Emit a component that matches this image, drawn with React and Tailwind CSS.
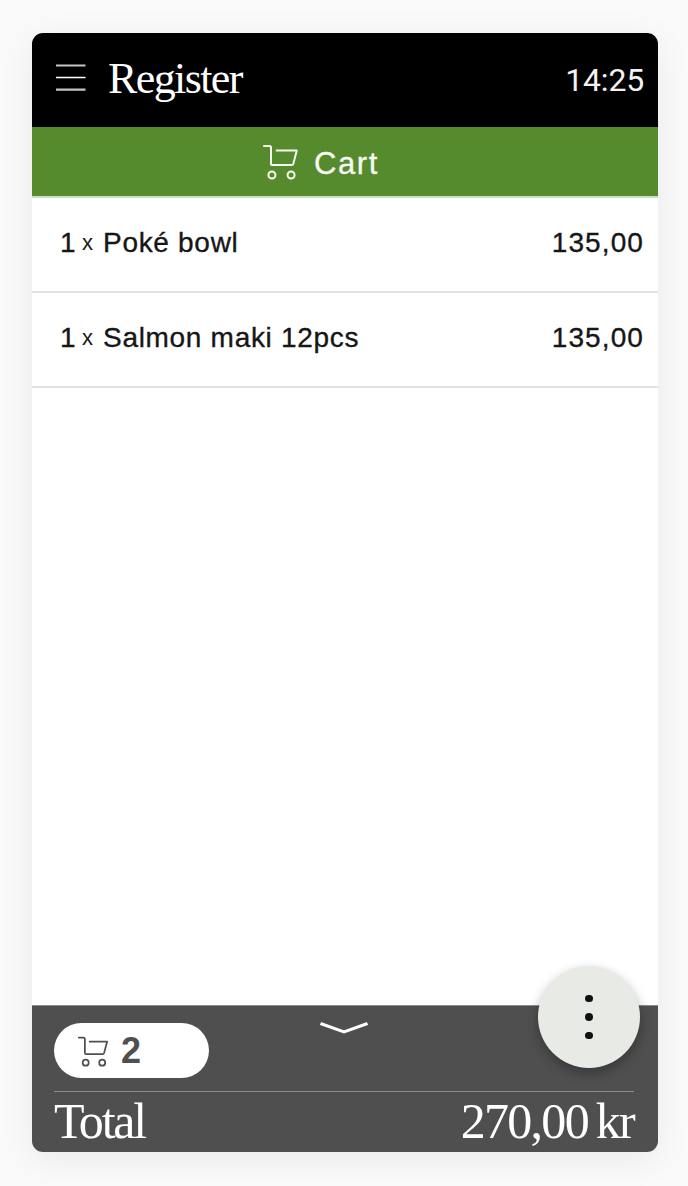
import React from "react";

function CartIcon({ className, strokeWidth }) {
  return (
    <svg viewBox="0 0 36 36" fill="none" stroke="currentColor" strokeWidth={strokeWidth} strokeLinecap="round" strokeLinejoin="round" className={className}>
      <path d="M1 2H6.4Q8 2 8 3.6V19.4Q8 21 9.5 21H28.6Q29.9 21 30.3 19.8L33.8 6.6H13.6" />
      <circle cx="8.9" cy="31" r="3.5" />
      <circle cx="28.1" cy="31" r="3.5" />
    </svg>
  );
}

function MenuIcon() {
  return (
    <svg viewBox="0 0 30 30" fill="none" stroke="#c4c4c4" className="-mt-[4px] h-[30px] w-[30px]">
      <path d="M0 2.5H29.5M0 26.7H29.5" strokeWidth="2.2" />
      <path d="M0 14.5H29.5" stroke="#ffffff" strokeWidth="1.4" />
    </svg>
  );
}

const items = [
  { quantity: 1, name: "Poké bowl", price: "135,00" },
  { quantity: 1, name: "Salmon maki 12pcs", price: "135,00" },
];

function CartRow({ quantity, name, price }) {
  return (
    <li className="flex h-[95px] items-center border-b-2 border-[#e2e2de] pr-[13px] pb-[4px] pl-[28px] text-[28px] leading-8 text-[#161616] [-webkit-text-stroke:0.35px_#161616]">
      <span className="w-[22px]">{quantity}</span>
      <span className="w-[20px] text-[22px] [-webkit-text-stroke:0px]">x</span>
      <span className="grow pl-[1px] tracking-[0.7px]">{name}</span>
      <span className="pr-[1px] tracking-[1.1px]">{price}</span>
    </li>
  );
}

export default function App() {
  return (
    <div className="h-[1186px] w-[688px] overflow-hidden bg-[#fafafa] px-[32px] pt-[33px] font-['Liberation_Sans',Arial,sans-serif]">
      <main className="flex h-[1119px] w-[626px] flex-col overflow-hidden rounded-[11px] bg-white shadow-[0_8px_36px_rgba(0,0,0,0.07)]">
        <header className="flex h-[94px] shrink-0 items-center bg-black pr-[14px] pl-[24px] text-white">
          <MenuIcon />
          <h1 className="-mt-[2px] grow pl-[22px] font-['Liberation_Serif',serif] text-[44px] leading-[50px] tracking-[-1.6px]">Register</h1>
          <time className="font-[Roboto,sans-serif] text-[32px] leading-9 tracking-[-0.2px] text-[#f2f2f2]">14:25</time>
        </header>
        <div className="flex h-[71px] shrink-0 items-center border-b-2 border-[#cddcc0] bg-[#558b2d] pl-[231px] text-[#f7faf3]">
          <CartIcon className="h-[36px] w-[36px]" strokeWidth="2" />
          <span className="pt-[5px] pl-[15px] text-[31px] leading-9 tracking-[1.6px] [-webkit-text-stroke:0.3px_#f7faf3]">Cart</span>
        </div>
        <ul className="grow">
          {items.map((item) => (
            <CartRow key={item.name} {...item} />
          ))}
        </ul>
        <footer className="relative flex h-[147px] shrink-0 flex-col border-t border-[#8c8c8c] bg-[#4f4f4f] px-[22px] pt-[17px] text-white">
          <div className="mr-[2px] flex h-[69px] items-start border-b border-[#8a8a8a]">
            <div className="flex h-[55px] w-[155px] items-center rounded-full bg-white pl-[24px] text-[#4f4f4f]">
              <CartIcon className="mt-[2px] h-[31px] w-[31px]" strokeWidth="2" />
              <span className="pl-[12px] text-[36px] leading-10 font-bold">2</span>
            </div>
            <svg viewBox="0 0 50 13" fill="none" stroke="#ffffff" strokeWidth="3" className="-mt-[2px] ml-[110px] h-[13px] w-[50px]">
              <path d="M1.5 2.5L25 11L48.5 2.5" />
            </svg>
          </div>
          <div className="flex items-center justify-between pr-[2px] font-['Liberation_Serif',serif] text-[50px] leading-[58px]">
            <span className="tracking-[-2.2px]">Total</span>
            <span className="tracking-[-1.7px] [word-spacing:-3px]">270,00 kr</span>
          </div>
          <button aria-label="More options" className="absolute top-[-40px] right-[18px] flex h-[102px] w-[102px] flex-col items-center justify-center gap-[11px] rounded-full bg-[#e8eae5] shadow-[0_5px_12px_rgba(0,0,0,0.3)]">
            <span className="size-[7.4px] rounded-full bg-[#111111]" />
            <span className="size-[7.4px] rounded-full bg-[#111111]" />
            <span className="size-[7.4px] rounded-full bg-[#111111]" />
          </button>
        </footer>
      </main>
    </div>
  );
}
